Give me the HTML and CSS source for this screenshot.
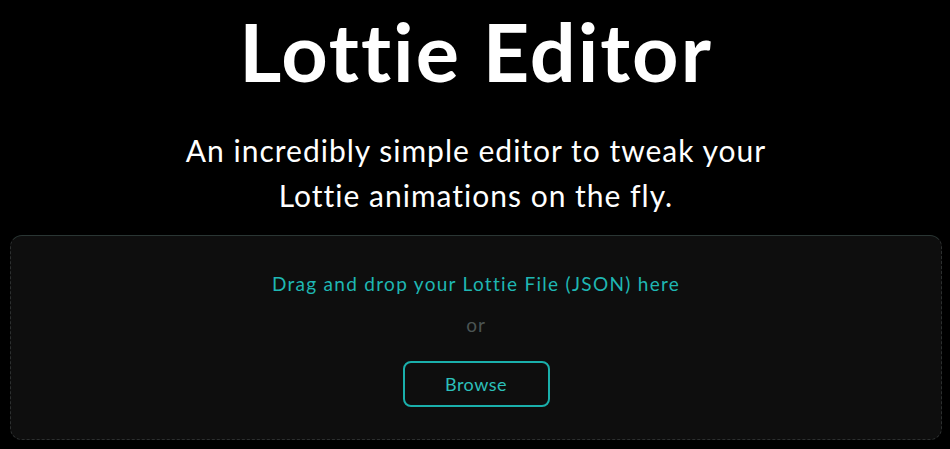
FILE: index.html
```html
<!DOCTYPE html>
<html lang="en">
<head>
<meta charset="utf-8">
<title>Lottie Editor</title>
<link rel="stylesheet" href="styles.css">
</head>
<body>
<main class="page">
  <h1 class="title">Lottie Editor</h1>
  <p class="subtitle">An incredibly simple editor to tweak your<br>Lottie animations on the fly.</p>
  <section class="dropzone">
    <p class="drop-text">Drag and drop your Lottie File (JSON) here</p>
    <p class="or">or</p>
    <button class="browse" type="button">Browse</button>
  </section>
</main>
</body>
</html>
```

FILE: styles.css
```css
html, body {
  margin: 0;
  padding: 0;
  background: #000;
  height: 100%;
  overflow: hidden;
}
body {
  font-family: "Lato", "Open Sans", sans-serif;
  color: #fff;
}
.page {
  display: flex;
  flex-direction: column;
  align-items: center;
  padding: 0 8px 0 10px;
}
.title {
  margin: 3px 0 0;
  font-size: 81px;
  font-weight: 700;
  line-height: 96px;
  letter-spacing: 2px;
}
.subtitle {
  margin: 29px 0 0;
  font-size: 30px;
  line-height: 45px;
  text-align: center;
  font-weight: 400;
  letter-spacing: 1px;
}
.dropzone {
  box-sizing: border-box;
  width: 932px;
  height: 205px;
  margin-top: 17px;
  background: #0e0e0e;
  border: 1px dashed #2c2f2f;
  border-top: 1px solid #2a3634;
  border-radius: 12px;
  display: flex;
  flex-direction: column;
  align-items: center;
  padding-top: 36px;
}
.drop-text {
  margin: 0;
  color: #1fb7b3;
  font-size: 19px;
  line-height: 24px;
  letter-spacing: 1.3px;
}
.or {
  margin: 17px 0 0;
  color: #4b5453;
  font-size: 19px;
  line-height: 24px;
  letter-spacing: 1px;
}
.browse {
  margin-top: 24px;
  width: 147px;
  height: 46px;
  background: transparent;
  border: 2px solid #1aafab;
  border-radius: 8px;
  color: #2cc0bb;
  font-family: "Lato", "Open Sans", sans-serif;
  font-size: 18px;
  letter-spacing: 0.5px;
  cursor: pointer;
}
```
